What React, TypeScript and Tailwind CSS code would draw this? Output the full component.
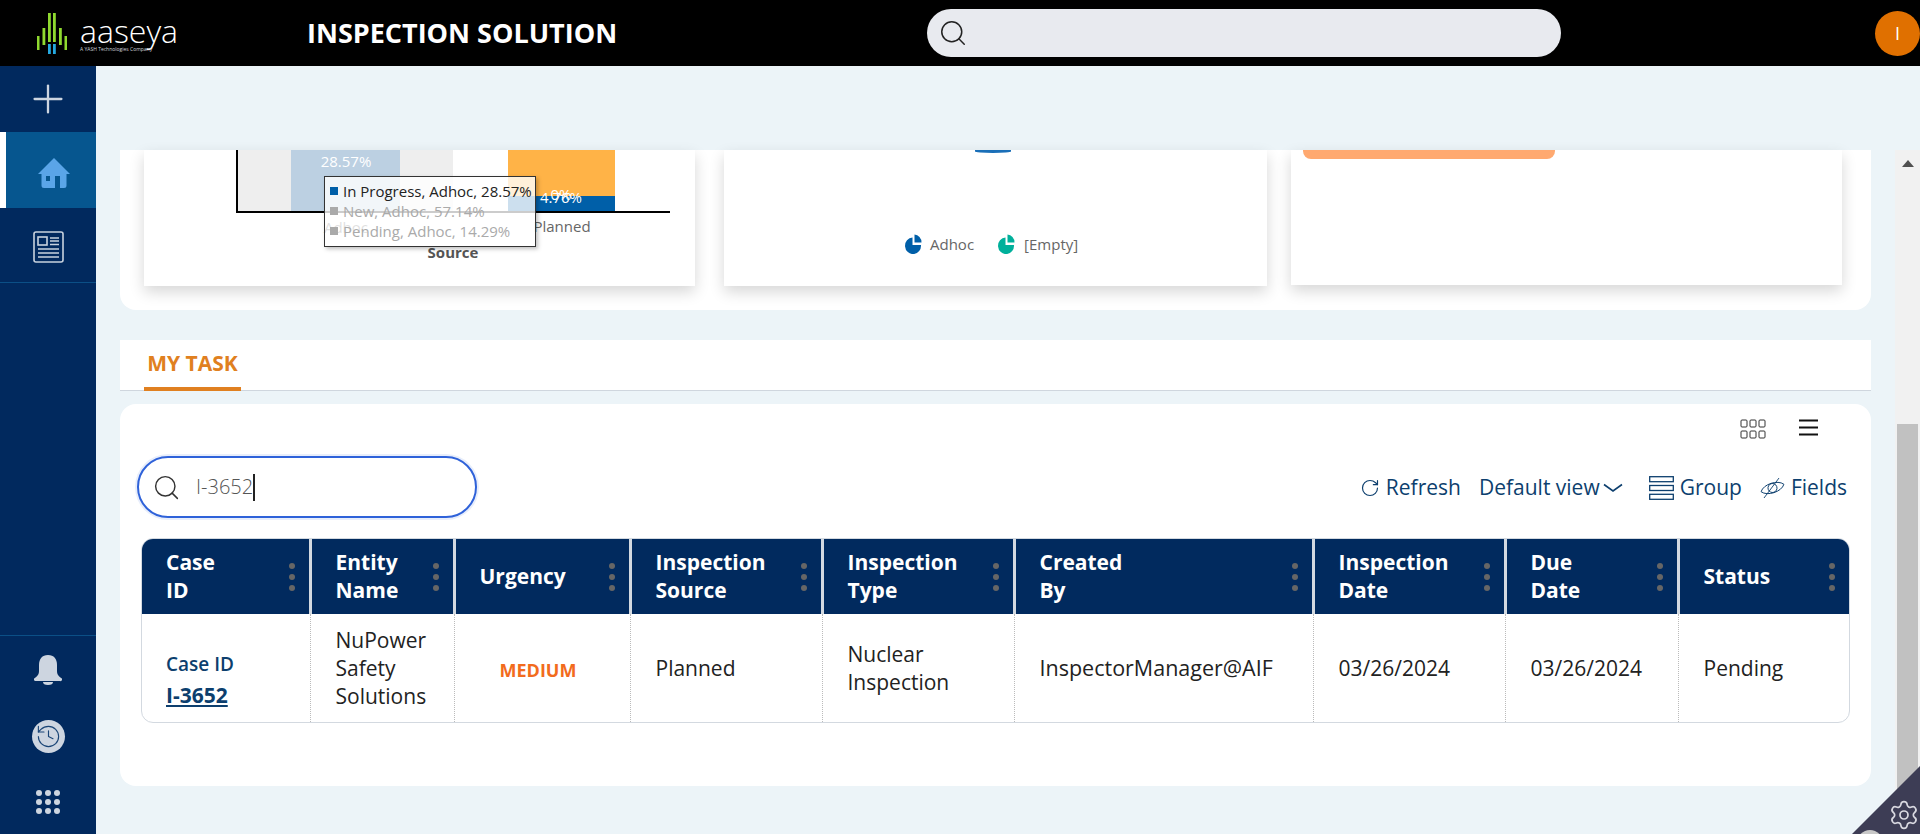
import React from 'react';
import { History, Plus, RotateCw, Search, Settings } from 'lucide-react';

const columns = [
  { first: 'Case', second: 'ID', width: 'w-[168px]' },
  { first: 'Entity', second: 'Name', width: 'w-[144px]' },
  { first: 'Urgency', second: '', width: 'w-[176px]' },
  { first: 'Inspection', second: 'Source', width: 'w-[192px]' },
  { first: 'Inspection', second: 'Type', width: 'w-[192px]' },
  { first: 'Created', second: 'By', width: 'w-[299px]' },
  { first: 'Inspection', second: 'Date', width: 'w-[192px]' },
  { first: 'Due', second: 'Date', width: 'w-[173px]' },
  { first: 'Status', second: '', width: 'w-[171px]' },
];

const PieIcon = ({ color }: { color: string }) => (
  <svg width="17" height="20" viewBox="0 0 17 20" fill={color}>
    <path d="M7.5 3.5 V11 H16 A8 8.3 0 1 1 7.5 3.5 Z" />
    <path d="M9.5 0.5 A7.5 8 0 0 1 16.5 8.5 H9.5 Z" />
  </svg>
);

const Logo = () => (
  <div className="flex items-start w-[307px] pl-[37px] h-[66px]">
    <svg width="33" height="55" viewBox="0 0 33 55" className="mt-[12px]" fill="#8fd92f">
      <rect x="0" y="24" width="2.5" height="14" />
      <rect x="5.5" y="16" width="2.8" height="17" />
      <rect x="11" y="1" width="2.8" height="29" />
      <rect x="16" y="1" width="2.8" height="29" />
      <rect x="22" y="16" width="2.8" height="17" />
      <rect x="27.5" y="24" width="2.5" height="14" />
      <rect x="11" y="32" width="2.8" height="10" fill="#25a9e0" />
      <rect x="16" y="32" width="2.8" height="10" fill="#25a9e0" />
    </svg>
    <div className="ml-[10px] text-white">
      <div className="text-[32px] leading-[33px] mt-[14px] font-light">aaseya</div>
      <div className="text-[5px] leading-[5px] text-gray-300">A YASH Technologies Company</div>
    </div>
  </div>
);

const HomeIcon = () => (
  <svg width="32" height="30" viewBox="0 0 32 30">
    <path fill="#5aa5e8" d="M16 0 L32 16 H28.5 V27.5 A2.5 2.5 0 0 1 26 30 H6 A2.5 2.5 0 0 1 3.5 27.5 V16 H0 Z" />
    <rect x="8" y="18" width="4" height="5" fill="#06568f" />
    <rect x="17" y="18" width="5" height="12" fill="#06568f" />
  </svg>
);

const NewsIcon = () => (
  <svg width="31" height="32" viewBox="0 0 31 32" fill="none" stroke="#c8d2de" strokeWidth="1.6">
    <rect x="1" y="1" width="29" height="30" rx="2" />
    <rect x="5" y="6" width="9" height="8" />
    <path d="M17 7 H26 M17 10 H26 M17 13.5 H26 M5 18 H26 M5 22 H26 M5 26 H26" />
  </svg>
);

const BellIcon = () => (
  <svg width="28" height="30" viewBox="0 0 28 30" fill="#cdd5e0">
    <path d="M14 0 C20 0 23 4 23 10 V16 C23 20 25 21 27 23 A1.5 1.5 0 0 1 26 26 H2 A1.5 1.5 0 0 1 1 23 C3 21 5 20 5 16 V10 C5 4 8 0 14 0 Z" />
    <path d="M9 27 H19 A5 3 0 0 1 9 27 Z" />
  </svg>
);

const Sidebar = () => (
  <aside className="w-[96px] shrink-0 flex flex-col bg-[#01295e]">
    <div className="h-[66px] flex items-center justify-center text-[#cdd5e0]">
      <Plus size={46} strokeWidth={1.2} />
    </div>
    <div className="h-[76px] flex items-center justify-center bg-[#06568f] border-l-[6px] border-white pl-[6px] pt-[6px]">
      <HomeIcon />
    </div>
    <div className="h-[75px] flex items-center justify-center border-b border-[#0b4f86] pt-[4px]">
      <NewsIcon />
    </div>
    <div className="mt-auto h-[199px] border-t border-[#0b4f86] flex flex-col items-center">
      <div className="mt-[19px]"><BellIcon /></div>
      <div className="mt-[35px] w-[33px] h-[33px] rounded-full bg-[#cdd5e0] flex items-center justify-center text-[#1a4576]">
        <History size={27} strokeWidth={1} />
      </div>
      <div className="mt-[37px] grid grid-cols-3 gap-[3px]">
        {Array.from({ length: 9 }).map((_, i) => (
          <span key={i} className="w-[6px] h-[6px] rounded-full bg-[#cdd5e0]" />
        ))}
      </div>
    </div>
  </aside>
);

const ChartCard = () => (
  <div className="relative w-[551px] h-[136px] bg-white shadow-[0_6px_14px_rgba(0,0,0,0.16)]">
    <svg width="551" height="136" viewBox="0 0 551 136">
      <rect x="92" y="0" width="56" height="61" fill="#eeeeee" />
      <rect x="147" y="0" width="109" height="61" fill="#bcd0e2" />
      <rect x="256" y="0" width="53" height="61" fill="#eeeeee" />
      <rect x="364" y="0" width="107" height="46" fill="#ffb347" />
      <rect x="364" y="46" width="107" height="15" fill="#005fa8" />
      <path d="M93 0 V62 H526" fill="none" stroke="#000" strokeWidth="2" />
      <text x="202" y="17" textAnchor="middle" fontSize="15" fill="#fff">28.57%</text>
      <text x="417" y="50" textAnchor="middle" fontSize="15" fill="#fff">0%</text>
      <text x="417" y="53" textAnchor="middle" fontSize="15" fill="#fff">4.76%</text>
      <text x="202" y="83" textAnchor="middle" fontSize="15" fill="#666">Adhoc</text>
      <text x="418" y="82" textAnchor="middle" fontSize="15" fill="#666">Planned</text>
      <text x="309" y="108" textAnchor="middle" fontSize="15" fontWeight="700" fill="#555">Source</text>
    </svg>
    <div className="absolute left-[180px] top-[26px] w-[212px] h-[71px] border border-[#333] bg-white/80 shadow-[2px_2px_4px_rgba(0,0,0,0.25)] pl-[5px] pt-[4px] text-[15px] leading-[20px] whitespace-nowrap">
      <div className="flex items-center text-[#222]"><span className="w-[8px] h-[8px] bg-[#005fa8] mr-[5px]" />In Progress, Adhoc, 28.57%</div>
      <div className="flex items-center text-[#aaa]"><span className="w-[8px] h-[8px] bg-[#aaa] mr-[5px]" />New, Adhoc, 57.14%</div>
      <div className="flex items-center text-[#aaa]"><span className="w-[8px] h-[8px] bg-[#aaa] mr-[5px]" />Pending, Adhoc, 14.29%</div>
    </div>
  </div>
);

const PieCard = () => (
  <div className="w-[543px] h-[136px] ml-[29px] bg-white shadow-[0_6px_14px_rgba(0,0,0,0.16)]">
    <div className="ml-[251px] w-[36px] h-[3px] rounded-b-[100%] bg-[#1a6fb8]" />
    <div className="mt-[80px] ml-[181px] flex items-center text-[15px] text-[#666]">
      <PieIcon color="#005fa8" />
      <span className="ml-[8px]">Adhoc</span>
      <span className="ml-[24px]"><PieIcon color="#00b09b" /></span>
      <span className="ml-[9px]">[Empty]</span>
    </div>
  </div>
);

const BarCard = () => (
  <div className="w-[551px] h-[135px] ml-[24px] bg-white shadow-[0_6px_14px_rgba(0,0,0,0.16)]">
    <div className="ml-[12px] w-[252px] h-[9px] rounded-b-lg bg-[#ffa970]" />
  </div>
);

const Toolbar = () => (
  <div className="flex items-center h-[62px] pl-[17px] pr-[24px]">
    <div className="w-[340px] h-[62px] rounded-full border-2 border-[#2f62d9] ring-2 ring-[#e8eefb] flex items-center pl-[13px] bg-white">
      <Search size={29} strokeWidth={1.2} className="text-[#333]" />
      <span className="ml-[15px] text-[20px] text-[#555] font-light">I-3652</span>
      <span className="w-[1.5px] h-[27px] bg-[#222]" />
    </div>
    <div className="ml-auto pt-[2px] flex items-center text-[21px] text-[#0d3f6e]">
      <RotateCw size={20} strokeWidth={1.4} />
      <span className="ml-[6px]">Refresh</span>
      <span className="ml-[18px]">Default view</span>
      <svg width="20" height="10" viewBox="0 0 20 10" fill="none" stroke="#0d3f6e" strokeWidth="1.6" className="ml-[3px]">
        <path d="M1 1.5 L10 8 L19 1.5" />
      </svg>
      <svg width="25" height="24" viewBox="0 0 25 24" fill="none" stroke="#0d3f6e" strokeWidth="1.3" className="ml-[26px]">
        <rect x="0.7" y="0.7" width="23.6" height="5" />
        <rect x="0.7" y="9.5" width="23.6" height="5" />
        <rect x="0.7" y="18.3" width="23.6" height="5" />
      </svg>
      <span className="ml-[6px]">Group</span>
      <svg width="25" height="22" viewBox="0 0 25 22" fill="none" stroke="#0d3f6e" strokeWidth="0.9" className="ml-[18px]">
        <g transform="rotate(-18 12.5 11)">
          <path d="M0.5 11 C5 4.5 20 4.5 24.5 11 C20 17.5 5 17.5 0.5 11 Z" />
          <circle cx="12.5" cy="11" r="4.5" />
        </g>
        <path d="M4 21 L19 1" />
      </svg>
      <span className="ml-[6px]">Fields</span>
    </div>
  </div>
);

const TaskTable = () => (
  <div className="mt-[20px] mx-[21px] rounded-xl overflow-hidden border border-[#d3d9e0]">
    <table className="table-fixed w-full border-collapse">
      <colgroup>
        {columns.map((c) => (
          <col key={c.first + c.second} className={c.width} />
        ))}
      </colgroup>
      <thead>
        <tr className="h-[75px] bg-[#012a5e] text-white">
          {columns.map((c, i) => (
            <th key={c.first + c.second} className={`relative pl-6 pb-[2px] text-left text-[21px] leading-[28px] font-bold ${i < 8 ? 'border-r-[3px] border-[#d3d9e0]' : ''}`}>
              {c.first}
              {c.second && <br />}
              {c.second}
              <span className="absolute right-[14px] top-[24px] flex flex-col gap-[5px]">
                <i className="w-[6px] h-[6px] rounded-full bg-[#666]" />
                <i className="w-[6px] h-[6px] rounded-full bg-[#666]" />
                <i className="w-[6px] h-[6px] rounded-full bg-[#666]" />
              </span>
            </th>
          ))}
        </tr>
      </thead>
      <tbody>
        <tr className="h-[108px] text-[21px] leading-[28px] text-[#222]">
          <td className="pl-6 pt-[22px] border-r border-dotted border-[#bbb] text-[#0d3f6e] font-semibold">
            <div className="text-[19px]">Case ID</div>
            <div className="mt-[3px] font-bold underline">I-3652</div>
          </td>
          <td className="pl-[25px] border-r border-dotted border-[#bbb]">NuPower Safety Solutions</td>
          <td className="pr-[8px] pt-[4px] border-r border-dotted border-[#bbb] text-center text-[18px] font-bold text-[#f26b1d]">MEDIUM</td>
          <td className="pl-[25px] border-r border-dotted border-[#bbb]">Planned</td>
          <td className="pl-[25px] border-r border-dotted border-[#bbb]">Nuclear Inspection</td>
          <td className="pl-[25px] border-r border-dotted border-[#bbb] text-[21.5px]">InspectorManager@AIF</td>
          <td className="pl-[25px] border-r border-dotted border-[#bbb]">03/26/2024</td>
          <td className="pl-[25px] border-r border-dotted border-[#bbb]">03/26/2024</td>
          <td className="pl-[25px]">Pending</td>
        </tr>
      </tbody>
    </table>
  </div>
);

export default function App() {
  return (
    <div className="relative w-[1920px] h-[834px] overflow-hidden flex flex-col bg-[#ecf4f8] font-['Open_Sans',sans-serif]">
      <header className="h-[66px] shrink-0 flex items-center bg-black">
        <Logo />
        <div className="w-[620px] text-[27px] font-bold text-white">INSPECTION SOLUTION</div>
        <div className="w-[634px] h-[48px] rounded-full bg-[#e8eaef] flex items-center pl-[11px]">
          <Search size={30} strokeWidth={1.2} className="text-[#222]" />
        </div>
        <div className="ml-auto w-[45px] h-[45px] rounded-full bg-[#e07000] flex items-center justify-center text-white text-[18px]">I</div>
      </header>
      <div className="flex-1 flex min-h-0">
        <Sidebar />
        <main className="flex-1 flex flex-col pt-[84px] px-6 overflow-hidden">
          <section className="shrink-0 h-[160px] flex items-start px-6 bg-white rounded-b-2xl">
            <ChartCard />
            <PieCard />
            <BarCard />
          </section>
          <div className="shrink-0 mt-[30px] h-[51px] bg-white border-b border-[#cfd6de] pl-6">
            <div className="w-[97px] h-[51px] -mb-px border-b-[4px] border-[#e08020] text-center text-[21px] leading-[47px] font-bold text-[#e08020]">MY TASK</div>
          </div>
          <section className="shrink-0 mt-[13px] h-[382px] bg-white rounded-2xl">
            <div className="flex items-start justify-end h-[52px] pt-[15px] pr-[53px]">
              <svg width="26" height="20" viewBox="0 0 26 20" fill="none" stroke="#333" strokeWidth="1">
                <rect x="1" y="1" width="6" height="7" rx="1" />
                <rect x="10" y="1" width="6" height="7" rx="1" />
                <rect x="19" y="1" width="6" height="7" rx="1" />
                <rect x="1" y="12" width="6" height="7" rx="1" />
                <rect x="10" y="12" width="6" height="7" rx="1" />
                <rect x="19" y="12" width="6" height="7" rx="1" />
              </svg>
              <svg width="19" height="17" viewBox="0 0 19 17" stroke="#111" strokeWidth="2" className="ml-[33px]">
                <path d="M0 1.5 H19 M0 8.5 H19 M0 15.5 H19" />
              </svg>
            </div>
            <Toolbar />
            <TaskTable />
          </section>
        </main>
        <div className="w-[25px] shrink-0 flex flex-col mt-[84px] bg-[#f1f1f1]">
          <div className="h-[274px] flex justify-center pt-[10px]">
            <span className="w-0 h-0 border-x-[6px] border-b-[7px] border-x-transparent border-b-[#505050]" />
          </div>
          <div className="flex-1 ml-[2px] mr-[2px] bg-[#c1c1c1]" />
        </div>
      </div>
      <div className="absolute right-0 bottom-0 w-[68px] h-[68px] bg-[#3d3d55] [clip-path:polygon(100%_0,100%_100%,0_100%)]">
        <Settings size={32} strokeWidth={1.3} className="absolute right-0 bottom-[3px] text-[#d8d8e0]" />
        <span className="absolute left-[5px] top-[64px] w-[26px] h-[26px] rounded-full bg-[#c8c8c8]" />
      </div>
    </div>
  );
}
